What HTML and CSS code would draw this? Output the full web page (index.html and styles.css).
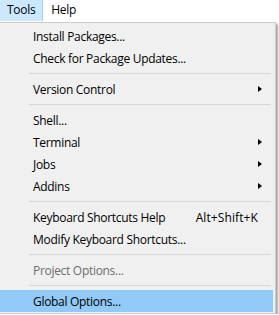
FILE: index.html
```html
<!DOCTYPE html>
<html lang="en">
<head>
  <meta charset="UTF-8">
  <title>Tools menu</title>
  <link rel="stylesheet" href="styles.css">
</head>
<body>
  <div class="menubar">
    <div class="bar-item active">Tools</div>
    <div class="bar-item">Help</div>
  </div>

  <div class="menu">
    <div class="item"><span class="label">Install Packages...</span></div>
    <div class="item"><span class="label">Check for Package Updates...</span></div>
    <div class="sep"></div>
    <div class="item"><span class="label">Version Control</span><span class="arrow"></span></div>
    <div class="sep"></div>
    <div class="item"><span class="label">Shell...</span></div>
    <div class="item"><span class="label">Terminal</span><span class="arrow"></span></div>
    <div class="item"><span class="label">Jobs</span><span class="arrow"></span></div>
    <div class="item"><span class="label">Addins</span><span class="arrow"></span></div>
    <div class="sep"></div>
    <div class="item"><span class="label">Keyboard Shortcuts Help</span><span class="shortcut">Alt+Shift+K</span></div>
    <div class="item"><span class="label">Modify Keyboard Shortcuts...</span></div>
    <div class="sep"></div>
    <div class="item disabled"><span class="label">Project Options...</span></div>
    <div class="sep"></div>
    <div class="item selected"><span class="label">Global Options...</span></div>
  </div>
</body>
</html>
```

FILE: styles.css
```css
* {
  margin: 0;
  padding: 0;
  box-sizing: border-box;
}

body {
  background: #fff;
  font-family: 'Open Sans', 'Noto Sans', sans-serif;
  font-size: 12px;
  letter-spacing: -0.3px;
  color: #000;
}

.menubar {
  display: flex;
  height: 22px;
  gap: 1px;
}

.bar-item {
  height: 21px;
  line-height: 20px;
  padding: 0 7px;
}

.bar-item.active {
  background: #cce8ff;
  border-right: 1px solid #99d1ff;
}

.menu {
  width: 276px;
  background: #f0f0f0;
  border: 1px solid #cccccc;
  border-left: none;
  padding: 2px 2px 1px 0;
  box-shadow: 2px 2px 2px rgba(0, 0, 0, 0.35);
}

.item {
  display: flex;
  align-items: center;
  height: 22px;
  padding: 0 11px 0 33px;
}

.label {
  flex: 1;
}

.shortcut {
  margin-right: 4px;
  letter-spacing: 0.1px;
}

.arrow {
  width: 0;
  height: 0;
  border-left: 4px solid #000;
  border-top: 3.5px solid transparent;
  border-bottom: 3.5px solid transparent;
}

.item.disabled {
  color: #6d6d6d;
}

.item.selected {
  background: #91c9f7;
}

.sep {
  height: 1px;
  margin: 4px 2px 4px 29px;
  background: #d7d7d7;
}
```
